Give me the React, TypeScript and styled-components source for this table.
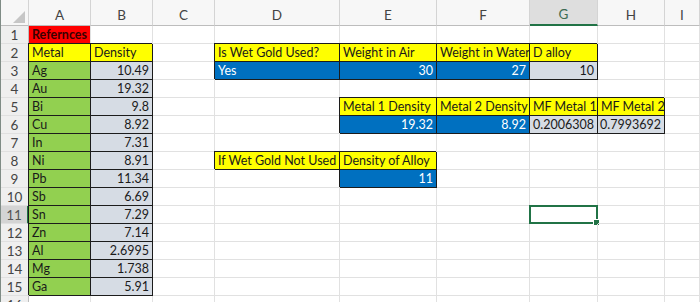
import React from "react";
import styled, { createGlobalStyle } from "styled-components";

const GlobalStyle = createGlobalStyle`
  html, body {
    margin: 0;
    padding: 0;
    background: #fff;
    overflow: hidden;
  }
`;

type Fill = "red" | "yellow" | "green" | "gray" | "blue" | "none";

interface CellData {
  text: string;
  fill: Fill;
  align?: "left" | "right";
  bold?: boolean;
  boxed?: boolean;
}

const FILLS: Record<Fill, string> = {
  red: "#ff0000",
  yellow: "#ffff00",
  green: "#92d050",
  gray: "#d6dce4",
  blue: "#0070c0",
  none: "transparent",
};

const COLUMNS = ["A", "B", "C", "D", "E", "F", "G", "H", "I"];
// first entry is the row number gutter
const COL_WIDTHS = [28, 62, 62, 62, 125, 97, 93, 68, 67, 35];
const ROW_COUNT = 16;
const SELECTED = { col: "G", row: 11 };

const metals: [string, string][] = [
  ["Ag", "10.49"],
  ["Au", "19.32"],
  ["Bi", "9.8"],
  ["Cu", "8.92"],
  ["In", "7.31"],
  ["Ni", "8.91"],
  ["Pb", "11.34"],
  ["Sb", "6.69"],
  ["Sn", "7.29"],
  ["Zn", "7.14"],
  ["Al", "2.6995"],
  ["Mg", "1.738"],
  ["Ga", "5.91"],
];

const head = (text: string): CellData => ({ text, fill: "yellow", boxed: true });
const input = (text: string, align: "left" | "right" = "right"): CellData => ({
  text,
  fill: "blue",
  align,
  boxed: true,
});
const calc = (text: string): CellData => ({ text, fill: "gray", align: "right", boxed: true });

const cells: Record<string, CellData> = {
  A1: { text: "Refernces", fill: "red", bold: true },
  A2: head("Metal"),
  B2: head("Density"),
  D2: head("Is Wet Gold Used?"),
  E2: head("Weight in Air"),
  F2: head("Weight in Water"),
  G2: head("D alloy"),
  D3: input("Yes", "left"),
  E3: input("30"),
  F3: input("27"),
  G3: calc("10"),
  E5: head("Metal 1 Density"),
  F5: head("Metal 2 Density"),
  G5: head("MF Metal 1"),
  H5: head("MF Metal 2"),
  E6: input("19.32"),
  F6: input("8.92"),
  G6: calc("0.2006308"),
  H6: calc("0.7993692"),
  D8: head("If Wet Gold Not Used"),
  E8: head("Density of Alloy"),
  E9: input("11"),
};

metals.forEach(([name, density], i) => {
  cells[`A${i + 3}`] = { text: name, fill: "green", boxed: true };
  cells[`B${i + 3}`] = calc(density);
});

const Sheet = styled.div`
  display: grid;
  grid-template-columns: ${COL_WIDTHS.map((w) => `${w}px`).join(" ")};
  grid-template-rows: 26px repeat(${ROW_COUNT}, 18px);
  width: 700px;
  height: 302px;
  box-sizing: border-box;
  border-left: 1px solid #7f8c86;
  overflow: hidden;
  font-family: Lato, "Open Sans", sans-serif;
`;

const Corner = styled.div`
  position: relative;
  background: #f7f7f7;
  border-right: 1px solid #d4d4d4;
  border-bottom: 1px solid #bdbdbd;
  &::after {
    content: "";
    position: absolute;
    right: 3px;
    bottom: 2px;
    width: 0;
    height: 0;
    border-left: 12px solid transparent;
    border-bottom: 12px solid #c6c6c6;
  }
`;

const ColHeader = styled.div<{ $active?: boolean }>`
  display: flex;
  align-items: flex-end;
  justify-content: center;
  padding-bottom: 2px;
  box-sizing: border-box;
  font-size: 13.5px;
  color: ${(p) => (p.$active ? "#3d6b52" : "#444")};
  background: ${(p) => (p.$active ? "#dedede" : "#f7f7f7")};
  border-right: 1px solid #d4d4d4;
  border-bottom: ${(p) => (p.$active ? "2px solid #217346" : "1px solid #bdbdbd")};
`;

const RowHeader = styled.div<{ $active?: boolean }>`
  display: flex;
  align-items: center;
  justify-content: center;
  box-sizing: border-box;
  font-size: 13.5px;
  color: ${(p) => (p.$active ? "#555" : "#444")};
  background: ${(p) => (p.$active ? "#d4d4d4" : "#efefef")};
  border-right: ${(p) => (p.$active ? "2px solid #217346" : "1px solid #bdbdbd")};
  border-bottom: 1px solid #e0e0e0;
`;

const Cell = styled.div<{
  $fill: Fill;
  $align: "left" | "right";
  $bold?: boolean;
  $boxed?: boolean;
  $selected?: boolean;
}>`
  position: relative;
  display: flex;
  align-items: center;
  justify-content: ${(p) => (p.$align === "right" ? "flex-end" : "flex-start")};
  padding: 0 3px;
  box-sizing: border-box;
  overflow: visible;
  white-space: nowrap;
  font-size: 12.5px;
  font-weight: ${(p) => (p.$bold ? 700 : 400)};
  color: ${(p) => (p.$fill === "blue" ? "#fff" : p.$fill === "red" ? "#3a0000" : "#1a1a1a")};
  background: ${(p) => FILLS[p.$fill]};
  border-right: 1px solid ${(p) => (p.$boxed ? "#1c1c1c" : "#e1e1e1")};
  border-bottom: 1px solid ${(p) => (p.$boxed ? "#1c1c1c" : "#e1e1e1")};
  box-shadow: ${(p) => (p.$boxed ? "-1px -1px 0 0 #1c1c1c" : "none")};

  ${(p) =>
    p.$selected &&
    `
    &::before {
      content: "";
      position: absolute;
      inset: -1px;
      border: 2px solid #217346;
      pointer-events: none;
    }
    &::after {
      content: "";
      position: absolute;
      right: -3px;
      bottom: -3px;
      width: 5px;
      height: 5px;
      background: #217346;
      border: 1px solid #fff;
    }
  `}
`;

const App: React.FC = () => {
  const rows = Array.from({ length: ROW_COUNT }, (_, i) => i + 1);

  return (
    <>
      <GlobalStyle />
      <Sheet>
        <Corner />
        {COLUMNS.map((c) => (
          <ColHeader key={c} $active={c === SELECTED.col}>
            {c}
          </ColHeader>
        ))}
        {rows.map((r) => (
          <React.Fragment key={r}>
            <RowHeader $active={r === SELECTED.row}>{r}</RowHeader>
            {COLUMNS.map((c) => {
              const data = cells[`${c}${r}`];
              return (
                <Cell
                  key={c}
                  $fill={data?.fill ?? "none"}
                  $align={data?.align ?? "left"}
                  $bold={data?.bold}
                  $boxed={data?.boxed}
                  $selected={c === SELECTED.col && r === SELECTED.row}
                >
                  {data?.text}
                </Cell>
              );
            })}
          </React.Fragment>
        ))}
      </Sheet>
    </>
  );
};

export default App;
